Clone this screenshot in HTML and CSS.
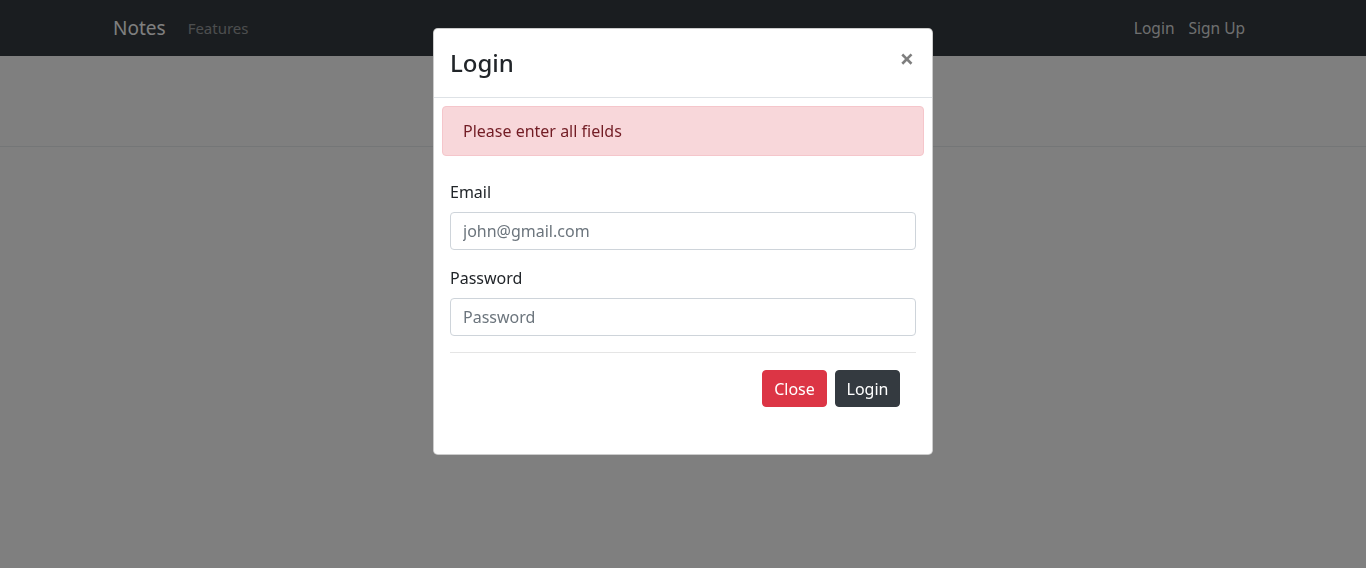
FILE: index.html
```
<!DOCTYPE html>
<html lang="en">
<head>
<meta charset="utf-8">
<title>Notes</title>
<link rel="stylesheet" href="styles.css">
</head>
<body>
<nav class="navbar">
  <div class="container nav-inner">
    <div class="nav-left">
      <a class="brand" href="#">Notes</a>
      <a class="nav-link muted" href="#">Features</a>
    </div>
    <div class="nav-right">
      <a class="nav-link" href="#">Login</a>
      <a class="nav-link" href="#">Sign Up</a>
    </div>
  </div>
</nav>
<header class="hero"></header>

<div class="backdrop"></div>

<div class="modal">
  <div class="modal-content">
    <div class="modal-header">
      <h4 class="modal-title">Login</h4>
      <button class="close" type="button">×</button>
    </div>
    <div class="alert">Please enter all fields</div>
    <form class="modal-body">
      <div class="form-group">
        <label class="label">Email</label>
        <input class="input" type="email" placeholder="john@gmail.com">
      </div>
      <div class="form-group">
        <label class="label">Password</label>
        <input class="input" type="password" placeholder="Password">
      </div>
      <hr class="divider">
      <div class="actions">
        <button type="button" class="btn btn-danger">Close</button>
        <button type="button" class="btn btn-dark">Login</button>
      </div>
    </form>
  </div>
</div>
</body>
</html>
```
FILE: styles.css
```
* { box-sizing: border-box; }
html, body { margin: 0; padding: 0; }
body {
  font-family: "Segoe UI", "Noto Sans", "Open Sans", sans-serif;
  font-size: 16px;
  line-height: 1.5;
  color: #212529;
  background: #fff;
  height: 568px;
  overflow: hidden;
}
a { text-decoration: none; }

.navbar {
  background: #343a40;
  height: 56px;
}
.container {
  width: 1140px;
  margin: 0 auto;
}
.nav-inner {
  height: 56px;
  display: flex;
  align-items: center;
  justify-content: space-between;
}
.nav-left, .nav-right { display: flex; align-items: center; }
.brand {
  color: #fff;
  font-size: 19px;
  line-height: 30px;
  margin-right: 14px;
}
.nav-link {
  color: rgba(255,255,255,.85);
  padding: 8px;
  font-size: 15.5px;
  line-height: 24px;
}
.nav-right .nav-link:first-child { padding-right: 6px; }
.nav-link.muted { color: rgba(255,255,255,.5); font-size: 15px; }

.hero {
  height: 91px;
  border-bottom: 1px solid #e9ecef;
}

.backdrop {
  position: fixed;
  inset: 0;
  background: rgba(0,0,0,.5);
}

.modal {
  position: fixed;
  top: 28px;
  left: 0;
  right: 0;
  display: flex;
  justify-content: center;
}
.modal-content {
  width: 500px;
  background: #fff;
  border: 1px solid rgba(0,0,0,.2);
  border-radius: 4.8px;
  padding-bottom: 47px;
}
.modal-header {
  display: flex;
  justify-content: space-between;
  align-items: flex-start;
  padding: 16px;
  border-bottom: 1px solid #dee2e6;
}
.modal-title {
  margin: 0;
  font-size: 24px;
  font-weight: 500;
  line-height: 36px;
}
.close {
  border: 0;
  background: transparent;
  padding: 0;
  font-family: inherit;
  font-size: 25px;
  font-weight: 700;
  line-height: 1;
  color: #000;
  opacity: .5;
  cursor: pointer;
  margin-top: 1px;
  margin-right: 2px;
}
.alert {
  margin: 8px 8px 0;
  padding: 12px 20px;
  background: #f8d7da;
  border: 1px solid #f5c6cb;
  border-radius: 4px;
  color: #721c24;
  line-height: 24px;
}
.modal-body {
  padding: 24px 16px 0;
  margin: 0;
}
.form-group { margin-bottom: 16px; }
.label {
  display: block;
  margin-bottom: 8px;
  line-height: 24px;
}
.input {
  display: block;
  width: 100%;
  height: 38px;
  padding: 6px 12px;
  font-family: inherit;
  font-size: 16px;
  line-height: 24px;
  color: #495057;
  background: #fff;
  border: 1px solid #ced4da;
  border-radius: 4px;
}
.input::placeholder { color: #6c757d; opacity: 1; }
.divider {
  margin: 0 0 17px;
  border: 0;
  border-top: 1px solid rgba(0,0,0,.1);
}
.actions {
  display: flex;
  justify-content: flex-end;
  gap: 8px;
  padding-right: 16px;
}
.btn {
  width: 65px;
  height: 37px;
  padding: 0;
  font-family: inherit;
  font-size: 16px;
  line-height: 24px;
  text-align: center;
  border: 1px solid transparent;
  border-radius: 4px;
  color: #fff;
}
.btn-danger { background: #dc3545; border-color: #dc3545; }
.btn-dark { background: #343a40; border-color: #343a40; }
```
